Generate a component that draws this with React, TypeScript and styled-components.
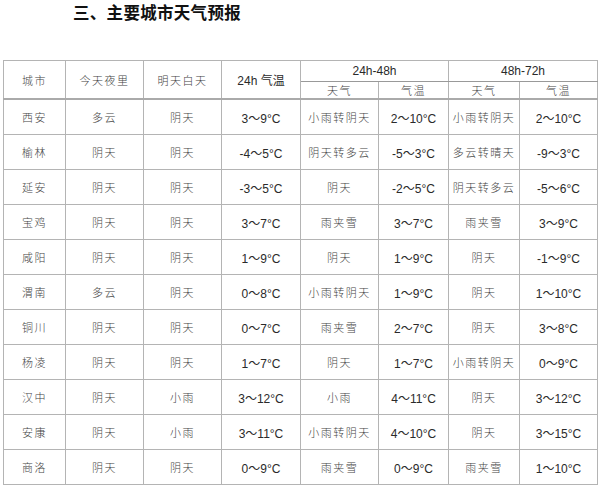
import React from "react"
import styled, { createGlobalStyle } from "styled-components"

const GlobalStyle = createGlobalStyle`
  body {
    margin: 0;
    background: #fff;
    font-family: "Liberation Sans", "Noto Sans CJK SC", sans-serif;
  }
`

const Page = styled.div`
  width: 600px;
  height: 487px;
  overflow: hidden;
  background: #fff;
`

const Title = styled.h2`
  margin: 0 0 37px 0;
  padding: 1px 0 0 73px;
  font-family: "Noto Sans CJK SC", sans-serif;
  font-size: 16.5px;
  line-height: 22px;
  font-weight: 700;
  color: #111;
  letter-spacing: 0.3px;
`

const Table = styled.table`
  margin-left: 3px;
  width: 595px;
  border-collapse: collapse;
  table-layout: fixed;
`

interface CellProps {
  $num?: boolean
  $strong?: boolean
}

const Cell = styled.td<CellProps>`
  height: 34px;
  padding: 0;
  text-align: center;
  vertical-align: middle;
  border: 1px solid #b4b4b4;
  font-family: ${p =>
    p.$num
      ? `"Liberation Sans", "Noto Sans CJK SC", sans-serif`
      : `"Noto Sans CJK SC", serif`};
  font-size: ${p => (p.$num ? "12px" : "11px")};
  font-weight: ${p => (p.$num ? 400 : 300)};
  color: ${p => (p.$num ? "#2a2a2a" : "#444")};
  letter-spacing: ${p => (p.$num ? "0" : "1.5px")};
  white-space: nowrap;
  border-left-color: ${p => (p.$strong ? "#444" : "#b4b4b4")};
`

const HeadCell = styled(Cell)`
  height: 19px;
  border-bottom-color: #999;
`

const TallHead = styled(Cell)`
  height: 37px;
  border-bottom: 2px solid #aaa;
`

const SubHead = styled(Cell)`
  height: 16px;
  border-bottom: 2px solid #aaa;
`

const widths = [62, 78, 78, 79, 78, 70, 71, 78]

type Row = [string, string, string, string, string, string, string, string]

const rows: Row[] = [
  ["西安", "多云", "阴天", "3～9°C", "小雨转阴天", "2～10°C", "小雨转阴天", "2～10°C"],
  ["榆林", "阴天", "阴天", "-4～5°C", "阴天转多云", "-5～3°C", "多云转晴天", "-9～3°C"],
  ["延安", "阴天", "阴天", "-3～5°C", "阴天", "-2～5°C", "阴天转多云", "-5～6°C"],
  ["宝鸡", "阴天", "阴天", "3～7°C", "雨夹雪", "3～7°C", "雨夹雪", "3～9°C"],
  ["咸阳", "阴天", "阴天", "1～9°C", "阴天", "1～9°C", "阴天", "-1～9°C"],
  ["渭南", "多云", "阴天", "0～8°C", "小雨转阴天", "1～9°C", "阴天", "1～10°C"],
  ["铜川", "阴天", "阴天", "0～7°C", "雨夹雪", "2～7°C", "阴天", "3～8°C"],
  ["杨凌", "阴天", "阴天", "1～7°C", "阴天", "1～7°C", "小雨转阴天", "0～9°C"],
  ["汉中", "阴天", "小雨", "3～12°C", "小雨", "4～11°C", "阴天", "3～12°C"],
  ["安康", "阴天", "小雨", "3～11°C", "小雨转阴天", "4～10°C", "阴天", "3～15°C"],
  ["商洛", "阴天", "阴天", "0～9°C", "雨夹雪", "0～9°C", "雨夹雪", "1～10°C"],
]

const numCols = new Set([3, 5, 7])
const strongCols = new Set([3, 5])

const App = () => {
  return (
    <Page>
      <GlobalStyle />
      <Title>三、主要城市天气预报</Title>
      <Table>
        <colgroup>
          {widths.map((w, i) => (
            <col key={i} style={{ width: w }} />
          ))}
        </colgroup>
        <thead>
          <tr>
            <TallHead rowSpan={2}>城市</TallHead>
            <TallHead rowSpan={2}>今天夜里</TallHead>
            <TallHead rowSpan={2}>明天白天</TallHead>
            <TallHead rowSpan={2} $num $strong>
              24h 气温
            </TallHead>
            <HeadCell colSpan={2} $num>
              24h-48h
            </HeadCell>
            <HeadCell colSpan={2} $num>
              48h-72h
            </HeadCell>
          </tr>
          <tr>
            <SubHead>天气</SubHead>
            <SubHead $strong>气温</SubHead>
            <SubHead>天气</SubHead>
            <SubHead>气温</SubHead>
          </tr>
        </thead>
        <tbody>
          {rows.map(row => (
            <tr key={row[0]}>
              {row.map((v, i) => (
                <Cell key={i} $num={numCols.has(i)} $strong={strongCols.has(i)}>
                  {v}
                </Cell>
              ))}
            </tr>
          ))}
        </tbody>
      </Table>
    </Page>
  )
}

export default App
